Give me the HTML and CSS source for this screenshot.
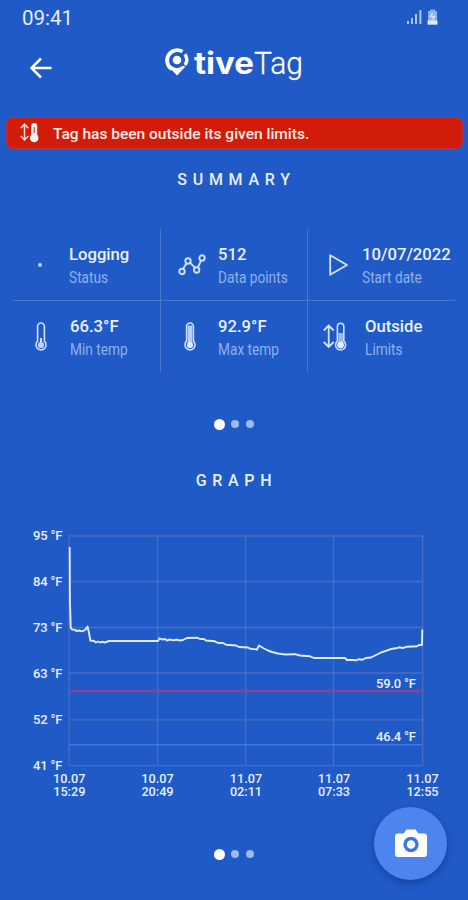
FILE: index.html
```html
<!DOCTYPE html>
<html lang="en">
<head>
<meta charset="UTF-8">
<meta name="viewport" content="width=device-width, initial-scale=1.0">
<title>Tive Tag</title>
<link rel="stylesheet" href="styles.css">
</head>
<body>

<div class="app">
    <div class="statusbar">
        <span class="clock">09:41</span>
        <svg class="signal" width="32" height="17" viewBox="0 0 32 17">
            <g fill="#a9c3f3">
                <rect x="1" y="12" width="2" height="3"/>
                <rect x="5" y="9" width="2" height="6"/>
                <rect x="9" y="5" width="2" height="10"/>
                <rect x="13.400" y="1" width="2" height="14"/>
            </g>
            <path d="M24 2V.5h5V2h2v13.500h-9V2z" fill="#8fb0ec"/>
            <path d="M21.500 11.500h10v4h-10z" fill="#e3ecff"/>
            <path d="M26.500 4l-2 3.500h4l-2 3.500" fill="none" stroke="#d8e4fc" stroke-width="1.300"/>
        </svg>
    </div>

    <div class="header">
        <svg class="back" width="24" height="22" viewBox="0 0 24 22">
            <path d="M12 1.500L2.500 11l9.500 9.500M2.500 11h20" fill="none" stroke="#fff" stroke-width="2.500"/>
        </svg>
        <svg class="logo" width="144" height="42" viewBox="0 0 144 42">
            <path d="M18.500 5.600A9.600 9.600 0 1 0 8.100 23.200" fill="none" stroke="#fff" stroke-width="3.800"/>
            <path d="M4.500 20.500L13 29.400l8.500-8.900-3.100-.4a9 9 0 0 1-11 0z" fill="#fff"/>
            <path d="M20.900 8.300a9.300 9.300 0 0 1 0 10.800" fill="none" stroke="#fff" stroke-width="3.400"/>
            <circle cx="13" cy="14" r="4.300" fill="#fff"/>
            <text class="logo-bold" x="30" y="27.500" textLength="60" lengthAdjust="spacingAndGlyphs">tive</text>
            <text class="logo-light" x="90" y="27.500" textLength="49" lengthAdjust="spacingAndGlyphs">Tag</text>
        </svg>
    </div>

    <div class="alert">
        <svg width="20" height="20" viewBox="0 0 20 20">
            <path d="M4.500 1.500v15M.7 5.200l3.800-4 3.800 4M.7 13l3.800 4 3.800-4" fill="none" stroke="#ffdcd6" stroke-width="1.500"/>
            <path d="M11.200 3a3 3 0 0 1 6 0v8.800a4.300 4.300 0 1 1-6 0z" fill="#fff0ed"/>
            <path d="M14.200 4v6" stroke="#dd5b50" stroke-width="1.300"/>
        </svg>
        <span>Tag has been outside its given limits.</span>
    </div>

    <h2 class="title">SUMMARY</h2>

    <div class="summary">
        <div class="cell">
            <div class="icon icon-status"><span class="pulse"></span></div>
            <div class="info"><b>Logging</b><span>Status</span></div>
        </div>
        <div class="cell">
            <div class="icon icon-points">
                <svg width="28" height="22" viewBox="0 0 28 22">
                    <g fill="none" stroke="#d3e0fb" stroke-width="1.900">
                        <path d="M5.100 14.800l3.400-5.400M12.100 8.700l4.700 5M19.900 13.400l3.300-7"/>
                        <circle cx="4" cy="17.500" r="2.700"/>
                        <circle cx="10" cy="7" r="2.700"/>
                        <circle cx="18.700" cy="16" r="2.700"/>
                        <circle cx="24" cy="4" r="2.700"/>
                    </g>
                </svg>
            </div>
            <div class="info"><b>512</b><span>Data points</span></div>
        </div>
        <div class="cell">
            <div class="icon icon-start">
                <svg width="22" height="24" viewBox="0 0 22 24">
                    <path d="M2.200 2.200L19 12 2.200 21.800z" fill="none" stroke="#d3e0fb" stroke-width="1.800" stroke-linejoin="round"/>
                </svg>
            </div>
            <div class="info"><b>10/07/2022</b><span>Start date</span></div>
        </div>
        <div class="cell">
            <div class="icon">
                <svg width="14" height="30" viewBox="0 0 14 30">
                    <path d="M3.600 4.400a3.400 3.400 0 0 1 6.800 0v14.800a5 5 0 1 1-6.800 0z" fill="none" stroke="#d3e0fb" stroke-width="1.600"/>
                    <path d="M7 16v6" stroke="#d3e0fb" stroke-width="2"/>
                    <circle cx="7" cy="23" r="3.100" fill="#c1d2f7"/>
                </svg>
            </div>
            <div class="info info-min"><b>66.3°F</b><span>Min temp</span></div>
        </div>
        <div class="cell">
            <div class="icon">
                <svg width="14" height="30" viewBox="0 0 14 30">
                    <path d="M3.600 4.400a3.400 3.400 0 0 1 6.800 0v14.800a5 5 0 1 1-6.800 0z" fill="none" stroke="#d3e0fb" stroke-width="1.600"/>
                    <path d="M7 3.500v18.500" stroke="#b9ccf5" stroke-width="4.500"/>
                    <circle cx="7" cy="23" r="3.100" fill="#e3ebfd"/>
                </svg>
            </div>
            <div class="info"><b>92.9°F</b><span>Max temp</span></div>
        </div>
        <div class="cell">
            <div class="icon">
                <svg width="26" height="30" viewBox="0 0 26 30">
                    <path d="M6.700 4v20.500M1.700 8.500l5-5 5 5M1.700 20l5 5 5-5" fill="none" stroke="#d3e0fb" stroke-width="1.800"/>
                    <path d="M15.400 4.400a3.200 3.200 0 0 1 6.400 0v14.800a5 5 0 1 1-6.400 0z" fill="none" stroke="#d3e0fb" stroke-width="1.600"/>
                    <path d="M18.600 11v11" stroke="#9db8f0" stroke-width="4.500"/>
                    <circle cx="18.600" cy="23" r="3.400" fill="#e3ebfd"/>
                </svg>
            </div>
            <div class="info info-limits"><b>Outside</b><span>Limits</span></div>
        </div>
    </div>

    <div class="dots"><i class="on"></i><i></i><i></i></div>

    <h2 class="title title-graph">GRAPH</h2>

    <svg class="chart" width="468" height="284" viewBox="0 520 468 284">
        <g class="grid">
            <path d="M69 536H423M69 581.500H423M69 627.500H423M69 673H423M69 719.800H423M69 765.700H423"/>
            <path d="M69 536V766M157.700 536V766M245.700 536V766M333.500 536V766M422.700 536V766"/>
        </g>
        <path class="limit-high" d="M69.500 691.200H422"/>
        <path class="limit-low" d="M69.500 744.700H422"/>
        <polyline class="line" points="69.7,547 69.9,600 70.7,627.5 72,629.500 75,629.800 76,631 79,630.500 82,631.300 85,630 87.500,626.500 89,633 90.300,640.500 94,641 96,642.500 98,641.500 100,642.500 103,641.800 105,642.500 109,641 158,641 159.500,638.300 162,639.500 165,639 167,640.500 170,639.500 173,640.300 177,639.800 180,640.500 183,640 187,638 197,637.700 200,639 204,639 206,640.500 215,641.300 218,643 223,643 226,644.700 236,645.500 239,647 248,647.500 250,648.700 257,649.500 259,645.500 263,648 268,650.500 272,652 278,653.500 285,654.500 295,654.200 300,655.500 310,656.300 314,658 345,658 347,660 354,660 356,660.500 359,659.200 362,659.800 366,658 371,657.500 376,655 381,652.500 386,650.800 391,649 396,648.300 399,647.300 403,648 407,646.700 417,646.300 419,645 422,645 422.300,629.500"/>
        <g class="label label-y">
            <text x="62.500" y="539.700" textLength="29.500">95 °F</text>
            <text x="62.500" y="585.700" textLength="29.500">84 °F</text>
            <text x="62.500" y="631.500" textLength="29.500">73 °F</text>
            <text x="62.500" y="677.500" textLength="29.500">63 °F</text>
            <text x="62.500" y="723.500" textLength="29.500">52 °F</text>
            <text x="62.500" y="769.500" textLength="29.500">41 °F</text>
            <text x="416" y="687.500" textLength="40">59.0 °F</text>
            <text x="416" y="740.700" textLength="40">46.4 °F</text>
        </g>
        <g class="label label-x">
            <text x="69.300" y="782.700">10.07</text><text x="69.300" y="796">15:29</text>
            <text x="157.500" y="782.700">10.07</text><text x="157.500" y="796">20:49</text>
            <text x="246" y="782.700">11.07</text><text x="246" y="796">02:11</text>
            <text x="334" y="782.700">11.07</text><text x="334" y="796">07:33</text>
            <text x="422.500" y="782.700">11.07</text><text x="422.500" y="796">12:55</text>
        </g>
    </svg>

    <div class="dots dots-graph"><i class="on"></i><i></i><i></i></div>

    <button class="camera" type="button" aria-label="Camera">
        <svg width="34" height="30" viewBox="0 0 34 30">
            <path d="M4 5.500h5.500L12.500 1.500h9L24.500 5.500H30a3 3 0 0 1 3 3V26a3 3 0 0 1-3 3H4a3 3 0 0 1-3-3V8.500a3 3 0 0 1 3-3z" fill="#fff"/>
            <circle cx="17" cy="16.500" r="6" fill="#fff" stroke="#3d79dd" stroke-width="3.400"/>
        </svg>
    </button>
</div>

</body>
</html>
```
FILE: styles.css
```css
body {
    margin: 0;
    font-family: Roboto, sans-serif;
    background-color: #1f5ac6;
    color: #fff;
}
.app {
    position: relative;
    width: 468px;
    height: 900px;
    overflow: hidden;
}
.statusbar {
    display: flex;
    justify-content: space-between;
    height: 38px;
    padding: 0 30px 0 22px;
    box-sizing: border-box;
}
.clock {
    font-size: 20.5px;
    line-height: 37px;
    color: #e6eeff;
}
.signal {
    margin-top: 9px;
}
.header {
    display: flex;
    height: 66px;
    padding-left: 29px;
    box-sizing: border-box;
    border-bottom: 1px solid #1d55bc;
}
.back {
    margin-top: 19px;
}
.logo {
    margin: 8px 0 0 111px;
    overflow: visible;
}
.logo-bold {
    font: 700 30px Inter, sans-serif;
    fill: #fff;
}
.logo-light {
    font: 300 32px Roboto, sans-serif;
    fill: #fff;
    stroke: #fff;
    stroke-width: 0.3;
}
.alert {
    display: flex;
    align-items: center;
    height: 32px;
    margin: 13px 5px 0 6px;
    padding-left: 13px;
    box-sizing: border-box;
    border: 1px solid #b43350;
    border-radius: 7px;
    background-color: #d11c0a;
    font-size: 15.5px;
    font-weight: 500;
    color: #ffe9e5;
}
.alert span {
    margin-left: 13px;
    padding-top: 1px;
}
.title {
    margin: 21px 0 0 5px;
    font-size: 16px;
    font-weight: 500;
    line-height: 20px;
    letter-spacing: 5.7px;
    text-align: center;
    color: #e9f0ff;
}
.summary {
    display: grid;
    grid-template-columns: 148px 147px 147px;
    grid-template-rows: 72px 71px;
    margin: 39px 13px 0;
}
.cell {
    display: flex;
    border-right: 1px solid #4976cf;
    border-bottom: 1px solid #4976cf;
}
.cell:nth-child(3n) {
    border-right: none;
}
.cell:nth-child(n+4) {
    border-bottom: none;
}
.icon {
    display: flex;
    flex: none;
    align-items: center;
    justify-content: center;
    width: 56px;
    box-sizing: border-box;
}
.cell:nth-child(3n+2) .icon {
    width: 57px;
}
.cell:nth-child(3n) .icon {
    width: 54px;
}
.icon-status {
    padding-right: 3px;
}
.icon-points {
    padding-left: 4px;
}
.icon-start {
    padding-left: 7px;
}
.pulse {
    width: 4px;
    height: 4px;
    border-radius: 50%;
    background-color: #b9d4fb;
}
.info {
    display: flex;
    flex-direction: column;
    padding-top: 14px;
    white-space: nowrap;
}
.info-min {
    padding-left: 1px;
}
.info-limits {
    padding-left: 3px;
}
.info b {
    font-size: 17px;
    font-weight: 500;
    line-height: 23px;
    color: #e9f0ff;
    transform: scaleX(0.98);
    transform-origin: left;
}
.info span {
    font-size: 16.5px;
    line-height: 23px;
    color: #8fb0ee;
    transform: scaleX(0.83);
    transform-origin: left;
}
.dots {
    display: flex;
    align-items: center;
    justify-content: center;
    gap: 7.7px;
    height: 12px;
    margin-top: 46px;
}
.dots i {
    width: 8px;
    height: 8px;
    border-radius: 50%;
    background-color: #9fb8ef;
}
.dots .on {
    width: 11px;
    height: 11px;
    margin-right: -1.5px;
    background-color: #fff;
}
.title-graph {
    margin-top: 41px;
}
.chart {
    display: block;
    margin-top: 29px;
}
.grid {
    fill: none;
    stroke: #4b6cc2;
    stroke-width: 1.3;
}
.limit-high {
    stroke: #a13e83;
    stroke-width: 2;
}
.limit-low {
    stroke: #3f78e2;
    stroke-width: 1.6;
}
.line {
    fill: none;
    stroke: #e3ecff;
    stroke-width: 1.9;
    stroke-linejoin: round;
}
.label {
    font-size: 13px;
    font-weight: 500;
    fill: #e9f0ff;
}
.label-y {
    text-anchor: end;
}
.label-x {
    font-size: 12.7px;
    text-anchor: middle;
}
.dots-graph {
    margin-top: 44px;
}
.camera {
    position: absolute;
    left: 374px;
    top: 807px;
    display: flex;
    align-items: center;
    justify-content: center;
    width: 73px;
    height: 73px;
    padding: 0 0 2px;
    border: none;
    border-radius: 50%;
    background-color: #4c85ed;
    box-shadow: 0 3px 7px rgba(10, 40, 110, 0.45);
}
```
